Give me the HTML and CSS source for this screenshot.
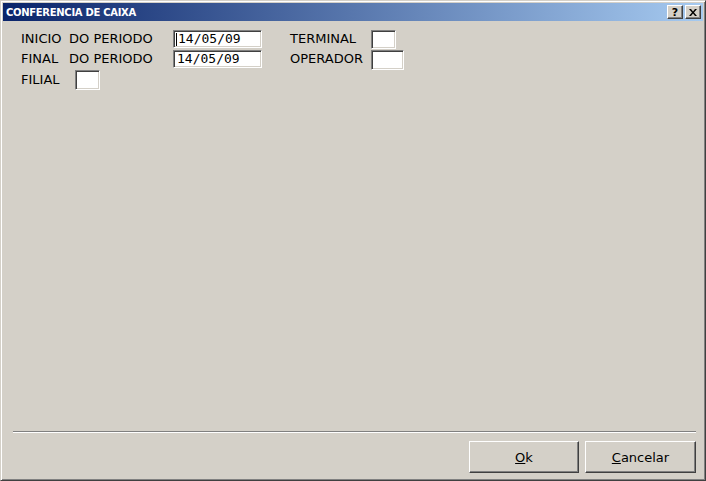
FILE: index.html
```html
<!DOCTYPE html>
<html lang="pt">
  <head>
    <meta charset="UTF-8" />
    <title>CONFERENCIA DE CAIXA</title>
    <link rel="stylesheet" href="styles.css">
  </head>

  <body>
    <section class="window">
      <header class="titlebar">
        <span class="title">CONFERENCIA DE CAIXA</span>
        <div class="caption-btns">
          <button class="cap-btn help">?</button>
          <button class="cap-btn close">
            <svg width="8" height="7" viewBox="0 0 8 7">
              <path d="M0 0h2l2 2.5L6 0h2L5 3.5 8 7H6L4 4.5 2 7H0l3-3.5z" fill="#000" />
            </svg>
          </button>
        </div>
      </header>

      <main class="content">
        <div class="grid">
          <span class="label"><span class="word">INICIO</span>DO PERIODO</span>
          <div class="field date"><span class="caret"></span>14/05/09</div>
          <span class="label">TERMINAL</span>
          <div class="field small"></div>

          <span class="label"><span class="word">FINAL</span>DO PERIODO</span>
          <div class="field date">14/05/09</div>
          <span class="label">OPERADOR</span>
          <div class="field medium"></div>
        </div>
        <div class="row">
          <span class="label filial">FILIAL</span>
          <div class="field small"></div>
        </div>
      </main>

      <footer class="footer">
        <hr class="sep" />
        <div class="actions">
          <button class="btn ok"><u>O</u>k</button>
          <button class="btn cancel"><u>C</u>ancelar</button>
        </div>
      </footer>
    </section>
  </body>
</html>
```

FILE: styles.css
```css
* {
  padding: 0;
  margin: 0;
  box-sizing: border-box;
}

html,
body {
  width: 706px;
  height: 481px;
  background: #d4d0c8;
  overflow: hidden;
  font-family: "DejaVu Sans", Verdana, sans-serif;
  font-size: 13px;
  color: #000;
}

.window {
  display: flex;
  flex-direction: column;
  width: 706px;
  height: 481px;
  padding: 1px;
  border: 1px solid;
  border-color: #d4d0c8 #404040 #404040 #d4d0c8;
  box-shadow: inset 1px 1px 0 #fff, inset -1px -1px 0 #808080;
  background: #d4d0c8;
}

.titlebar {
  display: flex;
  align-items: center;
  justify-content: space-between;
  height: 18px;
  margin: 1px 1px 0 1px;
  padding: 0 2px 0 3px;
  background: linear-gradient(to right, #0a246a, #a6caf0);
}

.title {
  color: #fff;
  font-weight: bold;
  font-size: 10px;
  letter-spacing: -0.3px;
}

.caption-btns {
  display: flex;
  gap: 2px;
}

.cap-btn {
  display: flex;
  align-items: center;
  justify-content: center;
  width: 16px;
  height: 14px;
  border: 1px solid;
  border-color: #fff #404040 #404040 #fff;
  box-shadow: inset -1px -1px 0 #808080;
  background: #d4d0c8;
  font-family: "DejaVu Sans", sans-serif;
  font-weight: bold;
  font-size: 11px;
  line-height: 1;
}

.content {
  flex: 1;
  padding: 9px 0 0 19px;
}

.grid {
  display: grid;
  grid-template-columns: 152px 117px 81px auto;
  grid-auto-rows: 20px;
  align-items: start;
}

.label {
  line-height: 18px;
  white-space: nowrap;
}

.word {
  display: inline-block;
  width: 48px;
}

.field {
  height: 18px;
  border: 1px solid;
  border-color: #808080 #fff #fff #808080;
  box-shadow: inset 1px 1px 0 #404040, inset -1px -1px 0 #d4d0c8;
  background: #fff;
}

.date {
  display: flex;
  align-items: center;
  width: 89px;
  padding-left: 3px;
  font-family: "DejaVu Sans Mono", monospace;
  font-size: 13px;
  line-height: 14px;
}

.caret {
  width: 1px;
  height: 13px;
  margin: 0 1px 0 -1px;
  background: #000;
}

.small {
  width: 25px;
  height: 19px;
}

.medium {
  width: 33px;
  height: 20px;
}

.row {
  display: flex;
  align-items: center;
}

.filial {
  width: 54px;
}

.row .field {
  height: 20px;
}

.footer {
  padding: 0 8px 6px 8px;
}

.sep {
  height: 2px;
  margin-left: 3px;
  border: none;
  border-top: 1px solid #808080;
  border-bottom: 1px solid #fff;
}

.actions {
  display: flex;
  justify-content: flex-end;
  gap: 6px;
  margin-top: 8px;
}

.btn {
  width: 110px;
  height: 32px;
  border: 1px solid;
  border-color: #fff #404040 #404040 #fff;
  box-shadow: inset -1px -1px 0 #808080;
  background: #d4d0c8;
  font-family: "DejaVu Sans", Verdana, sans-serif;
  font-size: 13px;
  color: #000;
}

.cancel {
  width: 111px;
}
```
